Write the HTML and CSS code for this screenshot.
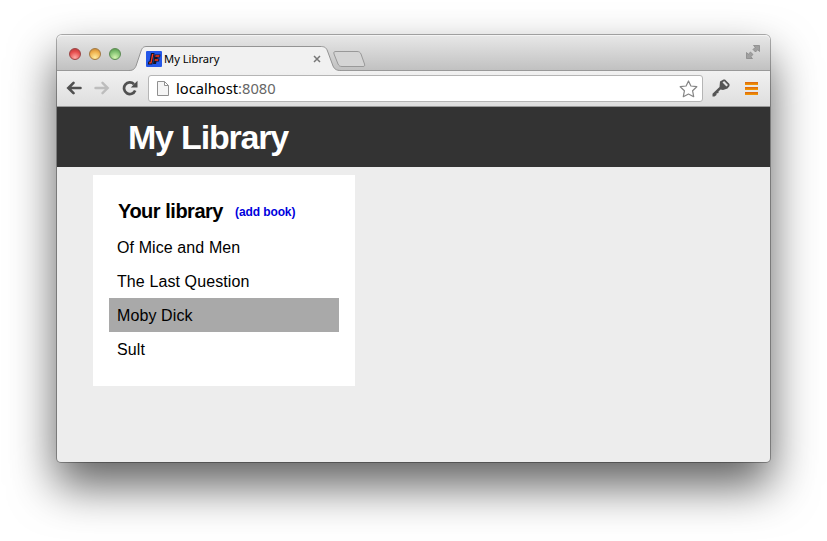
FILE: index.html
```
<!DOCTYPE html>
<html lang="en">
<head>
<meta charset="utf-8">
<title>My Library</title>
<link rel="stylesheet" href="styles.css">
</head>
<body>
<div class="window">
  <div class="tabstrip">
    <div class="lights"><i class="light red"></i><i class="light amber"></i><i class="light green"></i></div>
    <div class="tab">
      <svg class="tab-shape" width="212" height="26" viewBox="0 0 212 26"><path d="M0 26V24.500C5 24.500 6 22 7 20L12 5C13.500 1 15 .5 18 .5H191C195 .5 197 1 198.500 5L204 20C205.500 23 207 24.500 212 24.500V26Z" fill="#f1f1f1"/><path d="M0 24.500C5 24.500 6 22 7 20L12 5C13.500 1 15 .5 18 .5H191C195 .5 197 1 198.500 5L204 20C205.500 23 207 24.500 212 24.500" fill="none" stroke="#949494"/></svg>
      <svg class="favicon" width="16" height="16" viewBox="0 0 16 16"><rect width="16" height="16" rx="1" fill="#2457e8"/><path d="M5 2H8.500L6.300 13.500H1.800L2.300 10.500H3.500ZM8.500 3.500H14.500L14 6.500H11.500V7.500H13.500L13 10.500H10.500L10 13H7Z" fill="#101525"/><path d="M6 3H7.500L5.500 12.500H3L3.200 11.300H4.500ZM9.500 4.300H13.600L13.300 5.700H9.200ZM8.800 8.300H12.500L12.200 9.700H8.500Z" fill="#ff3a20"/></svg>
      <span class="tab-title">My Library</span>
      <svg class="close" width="8" height="8" viewBox="0 0 8 8"><path d="M1 1L7 7M7 1L1 7" stroke="#777" stroke-width="1.500"/></svg>
    </div>
    <svg class="newtab" width="34" height="17" viewBox="0 0 34 17"><path d="M3 .5H24C26 .5 27 1 28 3L31.500 13C32 15 31.500 15.500 30 15.500H9C7 15.500 6 15 5 13L1 3C.5 1 1 .5 3 .5Z" fill="#d5d5d5" stroke="#999"/></svg>
    <svg class="expand" width="14" height="14" viewBox="0 0 14 14"><path d="M7.500 .5H13.500V6.500L11.700 4.800L9.500 7L7 4.500L9.200 2.300ZM.5 7.500L2.300 9.200L4.500 7L7 9.500L4.800 11.700L6.500 13.500H.5Z" fill="#a0a0a0" stroke="#828282" stroke-width=".7"/></svg>
  </div>
  <div class="toolbar">
    <svg class="back" width="16" height="14" viewBox="0 0 16 14"><path d="M14.500 7H2.500M7.500 1.800L2.300 7L7.500 12.200" fill="none" stroke="#505050" stroke-width="2.600" stroke-linecap="round"/></svg>
    <svg class="forward" width="16" height="14" viewBox="0 0 16 14"><path d="M1.500 7H13.500M8.500 1.800L13.700 7L8.500 12.200" fill="none" stroke="#bdbdbd" stroke-width="2.400" stroke-linecap="round"/></svg>
    <svg class="reload" width="16" height="16" viewBox="0 0 16 16"><path d="M12 4.200A5.800 5.800 0 1 0 13.200 10.500" fill="none" stroke="#505050" stroke-width="2.700"/><path d="M15.500 .8V7.500H8.800Z" fill="#505050"/></svg>
    <div class="address">
      <svg class="doc" width="12" height="15" viewBox="0 0 12 15"><path d="M.5 .5H7.500L11.500 4.500V14.500H.5ZM7.500 .5V4.500H11.500" fill="#f5f5f5" stroke="#909090"/></svg>
      <span class="url">localhost<span class="port">:8080</span></span>
      <svg class="star" width="19" height="18" viewBox="0 0 19 18"><path d="M9.500 1L11.900 6L17.800 6.700L13.600 10.800L14.700 16.700L9.500 14L4.300 16.700L5.400 10.800L1.200 6.700L7.100 6Z" fill="#fff" stroke="#858585" stroke-width="1.200" stroke-linejoin="round"/></svg>
    </div>
    <svg class="key" width="18" height="18" viewBox="0 0 18 18"><path d="M8 2.500L11.500 .5H13L17.500 5V7L15.500 9.500L11 11L8.500 10.500L6.500 12.500V14L4.500 14.500V16L2.500 17.500H.5V14.800L7.500 8Z" fill="#555"/><path d="M11.300 2.800L15.200 6.700" stroke="#e5e5e5" stroke-width="2.200"/></svg>
    <div class="menu"><i></i><i></i><i></i></div>
  </div>
  <header class="masthead"><h1>My Library</h1></header>
  <main class="page">
    <section class="library">
      <div class="heading"><h2>Your library</h2><a class="add">(add book)</a></div>
      <ul class="books"><li>Of Mice and Men</li><li>The Last Question</li><li class="selected">Moby Dick</li><li>Sult</li></ul>
    </section>
  </main>
</div>
</body>
</html>
```
FILE: styles.css
```
* { box-sizing: border-box; }
body { margin: 0; height: 541px; overflow: hidden; background: #fff; font-family: "Liberation Sans", sans-serif; }
svg { display: block; flex: none; }
.window { width: 713px; height: 427px; margin: 35px 0 0 57px; display: flex; flex-direction: column; border-radius: 5px 5px 4px 4px; background: #ededed; box-shadow: 0 0 0 1px rgba(0,0,0,.3), 0 23px 46px 1px rgba(0,0,0,.62); }
.tabstrip { height: 36px; flex: none; display: flex; align-items: flex-start; border-radius: 5px 5px 0 0; border-bottom: 1px solid #999; background: linear-gradient(#e8e8e8, #c1c1c1); box-shadow: inset 0 1px #f4f4f4; }
.lights { display: flex; gap: 8px; margin: 13px 0 0 12px; }
.light { width: 12px; height: 12px; border-radius: 50%; border: 1px solid #777; }
.red { background: radial-gradient(circle at 50% 85%, #ffaaa5, #e54b4b 60%, #b03638); border-color: #9c4444; }
.amber { background: radial-gradient(circle at 50% 85%, #ffeca0, #efb04c 60%, #bd7b30); border-color: #a37a42; }
.green { background: radial-gradient(circle at 50% 85%, #d4f5b0, #80c070 60%, #4e8e45); border-color: #5c8b52; }
.tab { position: relative; width: 212px; height: 26px; margin: 11px 0 0 8px; display: flex; align-items: center; padding: 0 20px 0 17px; }
.tab-shape { position: absolute; left: 0; top: 0; }
.favicon, .tab-title, .close { position: relative; }
.tab-title { margin: 0 0 2px 2px; flex: 1; font: 11.200px "Noto Sans", sans-serif; color: #000; }
.newtab { margin: 16px 0 0 -8px; }
.expand { margin: 10px 10px 0 auto; }
.toolbar { height: 36px; flex: none; display: flex; align-items: center; padding-bottom: 1px; background: linear-gradient(#f1f1f1, #dedede); border-bottom: 1px solid #999; }
.back { margin-left: 9px; }
.forward { margin-left: 12px; }
.reload { margin-left: 12px; }
.address { width: 555px; height: 27px; margin: 1px 0 0 10px; padding: 0 4px 0 8px; display: flex; align-items: center; border: 1px solid #b5b5b5; border-radius: 3px; background: #fff; }
.url { flex: 1; margin: 0 0 2px 7px; font: 14.700px "Noto Sans", sans-serif; color: #000; }
.port { color: #666; }
.key { margin-left: 9px; }
.menu { margin-left: 15px; display: flex; flex-direction: column; gap: 2px; }
.menu i { width: 13px; height: 3px; background: linear-gradient(#dc6511, #f39b00); }
.masthead { height: 60px; flex: none; padding-left: 71px; background: #333; color: #fff; }
.masthead h1 { margin: 0; font-size: 34px; line-height: 60px; letter-spacing: -1.200px; }
.page { flex: 1; padding: 8px 0 0 36px; }
.library { width: 262px; height: 211px; padding: 18px 16px; background: #fff; }
.heading { height: 37px; padding-left: 9px; display: flex; align-items: center; gap: 12px; }
.heading h2 { margin: 0; font-size: 20px; line-height: 37px; letter-spacing: -.480px; }
.add { color: #00d; font-size: 12px; font-weight: bold; letter-spacing: -.100px; }
.books { margin: 0; padding: 0; list-style: none; }
.books li { height: 34px; padding-left: 8px; font-size: 16px; line-height: 36px; letter-spacing: .100px; }
.books .selected { background: #a9a9a9; }
```
